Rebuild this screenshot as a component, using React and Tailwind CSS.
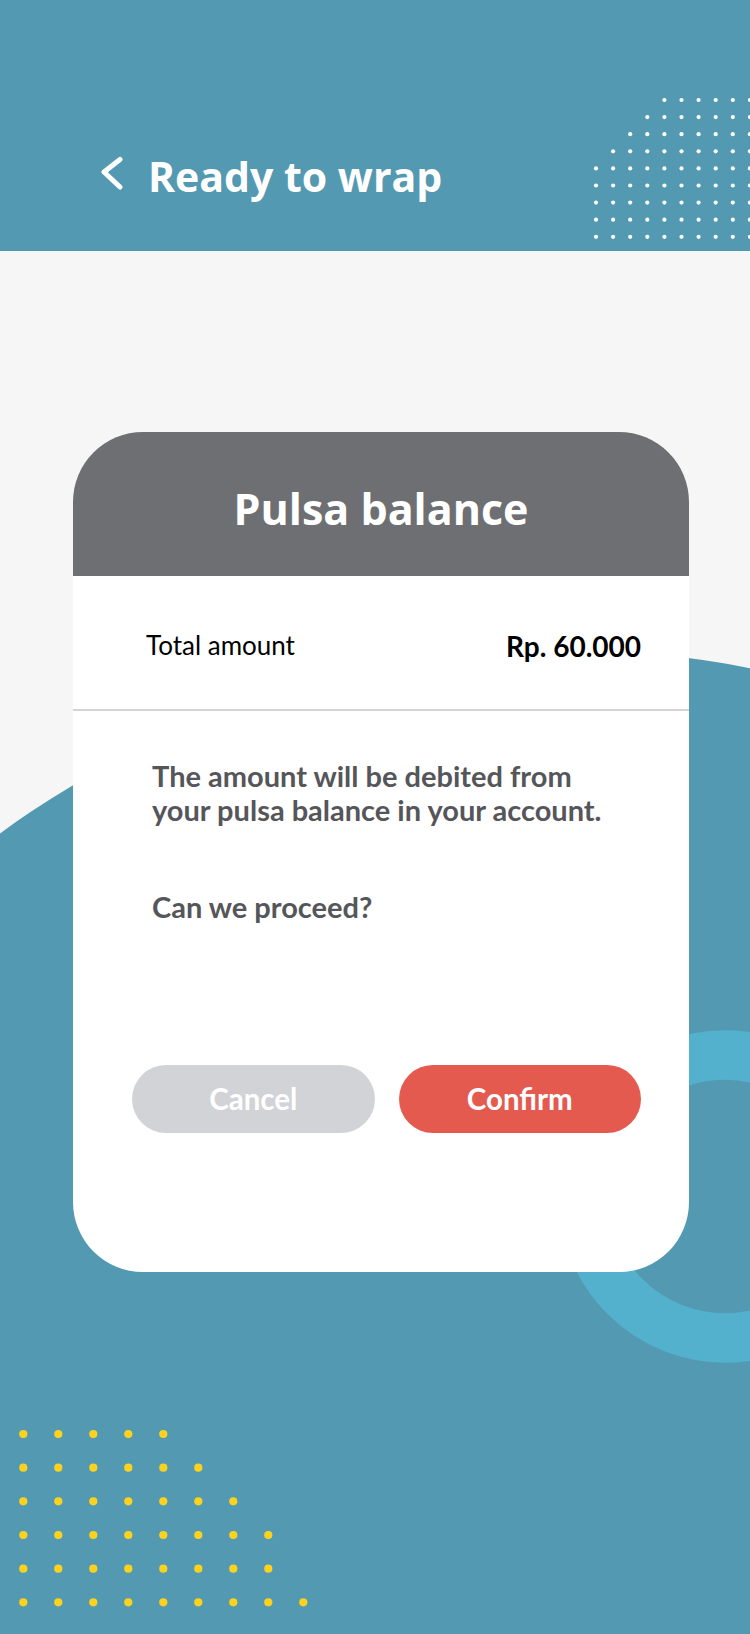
import React from "react";

const TEAL = "#5399b1";

function HeaderDots() {
    // white dot grid in the top right corner
    const dots = [];
    const starts = [4, 3, 2, 1, 0, 0, 0, 0, 0];
    starts.forEach((start, row) => {
        for (let col = start; col < 10; col++) {
            dots.push(<circle key={row + "-" + col} cx={6 + col * 17.1} cy={5 + row * 17.1} r="2.1" fill="#ffffff" />);
        }
    });
    return (
        <svg className="absolute left-[590px] top-[95px]" width="170" height="150" viewBox="0 0 170 150">
            {dots}
        </svg>
    );
}

function YellowDots() {
    const dots = [];
    const counts = [5, 6, 7, 8, 8, 9];
    counts.forEach((count, row) => {
        for (let col = 0; col < count; col++) {
            dots.push(<circle key={row + "-" + col} cx={23.3 + col * 35} cy={5 + row * 33.66} r="4.1" fill="#fcd21e" />);
        }
    });
    return (
        <svg width="330" height="180" viewBox="0 0 330 180">
            {dots}
        </svg>
    );
}

function App() {
    return (
        <div className="relative w-[750px] h-[1634px] overflow-hidden bg-[#f6f6f6]" style={{ fontFamily: "Lato, 'Open Sans', sans-serif" }}>
            {/* background shapes */}
            <svg className="absolute left-0 top-0" width="750" height="1634" viewBox="0 0 750 1634">
                <circle cx="564" cy="1609" r="959" fill={TEAL} />
                <circle cx="725" cy="1196.5" r="141.5" fill="none" stroke="#53b1ce" strokeWidth="49.5" />
            </svg>

            <div className="relative">
                {/* header */}
                <div className="relative h-[251px] bg-[#5399b1]">
                    <HeaderDots />
                    <div className="flex items-center pl-[98px] pt-[148px]">
                        <svg width="28" height="40" viewBox="0 0 28 40" className="mr-[22px]">
                            <path d="M22 4.5 L6 17 L22 32" transform="translate(0 -1)" fill="none" stroke="#ffffff" strokeWidth="5" strokeLinecap="round" strokeLinejoin="round" />
                        </svg>
                        <h1 className="text-[41px] leading-[56px] font-bold text-white" style={{ fontFamily: "'Open Sans', sans-serif" }}>
                            Ready to wrap
                        </h1>
                    </div>
                </div>

                {/* card */}
                <div className="ml-[73px] mt-[181px] w-[616px] rounded-[70px] bg-white overflow-hidden">
                    <div className="h-[144px] bg-[#6e6f73] flex items-center justify-center pt-[9px]">
                        <h2 className="text-[43px] leading-[58px] font-bold text-white" style={{ fontFamily: "'Open Sans', sans-serif" }}>
                            Pulsa balance
                        </h2>
                    </div>
                    <div className="h-[133px] flex items-center justify-between pl-[73px] pr-[48px] pt-[6px]">
                        <p className="text-[26px] text-black">Total amount</p>
                        <p className="text-[28px] font-bold text-black">Rp. 60.000</p>
                    </div>
                    <div className="h-[2px] bg-[#d4d4d6]"></div>
                    <div className="pl-[79px] pr-[20px] pt-[48px]">
                        <p className="text-[29px] leading-[34px] font-bold text-[#55565a]">
                            The amount will be debited from<br />your pulsa balance in your account.
                        </p>
                        <p className="mt-[63px] text-[29px] leading-[34px] font-bold text-[#55565a]">Can we proceed?</p>
                    </div>
                    <div className="flex gap-[24px] pl-[59px] pr-[48px] pt-[141px] pb-[139px]">
                        <button className="h-[68px] w-[243px] rounded-full bg-[#d2d3d7] text-[29.5px] font-bold text-white">Cancel</button>
                        <button className="h-[68px] w-[243px] rounded-full bg-[#e45a4f] text-[29.5px] font-bold text-white">Confirm</button>
                    </div>
                </div>

                {/* yellow dots */}
                <div className="mt-[157px]">
                    <YellowDots />
                </div>
            </div>
        </div>
    );
}

export default App;
